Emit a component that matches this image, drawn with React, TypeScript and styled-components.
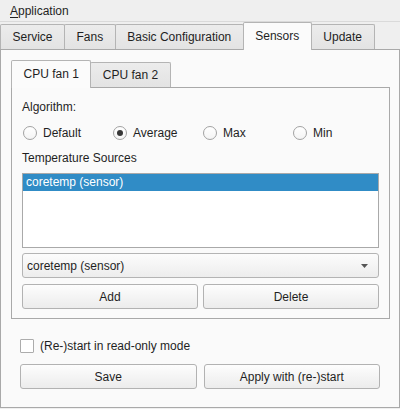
import React from 'react';
import styled, { createGlobalStyle } from 'styled-components';

const GlobalStyle = createGlobalStyle`
  html, body {
    margin: 0;
    padding: 0;
  }
  body {
    background: #efefef;
    font-family: "Liberation Sans", Arial, sans-serif;
    font-size: 12px;
    color: #1f1f1f;
  }
`;

const Window = styled.div`
  display: flex;
  flex-direction: column;
  width: 400px;
  height: 409px;
  overflow: hidden;
`;

const MenuBar = styled.div`
  display: flex;
  align-items: center;
  height: 21px;
  padding-left: 10px;
  border-bottom: 1px solid #dadada;
  box-sizing: content-box;
`;

const Mnemonic = styled.span`
  text-decoration: underline;
  text-underline-offset: 2px;
`;

const TabBar = styled.div`
  display: flex;
  align-items: flex-end;
  height: 27px;
  flex-shrink: 0;
`;

const Tab = styled.div<{ $active?: boolean }>`
  position: relative;
  z-index: ${p => (p.$active ? 2 : 1)};
  flex-shrink: 0;
  box-sizing: border-box;
  display: flex;
  align-items: center;
  justify-content: center;
  height: ${p => (p.$active ? 28 : 25)}px;
  margin-bottom: ${p => (p.$active ? -1 : 0)}px;
  margin-left: -1px;
  padding: 0 11.5px ${p => (p.$active ? 1 : 0)}px;
  border: 1px solid #b4b4b4;
  border-bottom: none;
  border-radius: 2px 2px 0 0;
  background: ${p => (p.$active ? '#fbfbfb' : 'linear-gradient(#ececec, #e3e3e3)')};
  white-space: nowrap;

  &:first-child {
    margin-left: 0;
  }
`;

const OuterPane = styled.div`
  flex: 1;
  display: flex;
  flex-direction: column;
  margin-bottom: 1px;
  padding: 10px 9px 0 10px;
  border: 1px solid #a9a9a9;
  background: #fafafa;
`;

const InnerPane = styled.div`
  display: flex;
  flex-direction: column;
  padding: 12px 10px 9px 10px;
  border: 1px solid #a9a9a9;
  background: #fafafa;
`;

const Label = styled.div<{ $top?: number }>`
  line-height: 15px;
  margin-top: ${p => p.$top ?? 0}px;
`;

const RadioRow = styled.div`
  display: grid;
  grid-template-columns: repeat(4, 90px);
  height: 16px;
  margin: 10px 0 0 1px;
`;

const RadioOption = styled.label`
  display: flex;
  align-items: center;
  gap: 6px;
`;

const RadioCircle = styled.span<{ $checked?: boolean }>`
  position: relative;
  box-sizing: border-box;
  width: 14px;
  height: 14px;
  border: 1px solid #a2a2a2;
  border-radius: 50%;
  background: linear-gradient(#ffffff, #f4f4f4);

  &::after {
    content: '';
    display: ${p => (p.$checked ? 'block' : 'none')};
    position: absolute;
    left: 3px;
    top: 3px;
    width: 6px;
    height: 6px;
    border-radius: 50%;
    background: #363636;
  }
`;

const ListBox = styled.div`
  height: 75px;
  margin-top: 7px;
  box-sizing: border-box;
  border: 1px solid #a9a9a9;
  background: #ffffff;
`;

const ListItem = styled.div<{ $selected?: boolean }>`
  height: 17px;
  line-height: 17px;
  padding-left: 3px;
  background: ${p => (p.$selected ? '#308cc6' : 'transparent')};
  color: ${p => (p.$selected ? '#ffffff' : 'inherit')};
`;

const ComboBox = styled.div`
  display: flex;
  align-items: center;
  justify-content: space-between;
  height: 25px;
  margin-top: 5px;
  box-sizing: border-box;
  padding: 0 10px 0 4px;
  border: 1px solid #b4b4b4;
  border-radius: 3px;
  background: linear-gradient(#fcfcfc, #ededed);
`;

const ButtonRow = styled.div<{ $gap: number; $top: number }>`
  display: grid;
  grid-template-columns: 1fr 1fr;
  gap: ${p => p.$gap}px;
  margin-top: ${p => p.$top}px;
`;

const Button = styled.button`
  height: 25px;
  box-sizing: border-box;
  padding: 0;
  border: 1px solid #b2b2b2;
  border-radius: 3px;
  background: linear-gradient(#fdfdfd, #ececec);
  font: inherit;
  color: #1f1f1f;
  text-align: center;
`;

const Footer = styled.div`
  display: flex;
  flex-direction: column;
  padding: 0 10px 0 9px;
`;

const CheckRow = styled.label`
  display: flex;
  align-items: center;
  gap: 6px;
  height: 14px;
  margin-top: 20px;
`;

const CheckBox = styled.span`
  box-sizing: border-box;
  width: 14px;
  height: 14px;
  border: 1px solid #acacac;
  border-radius: 1px;
  background: #ffffff;
`;

const Arrow = () => (
  <svg width="7" height="4" viewBox="0 0 7 4">
    <polygon points="0,0 7,0 3.5,4" fill="#555555" />
  </svg>
);

const algorithms = ['Default', 'Average', 'Max', 'Min'];

export default function App() {
  return (
    <>
      <GlobalStyle />
      <Window>
        <MenuBar>
          <span>
            <Mnemonic>A</Mnemonic>pplication
          </span>
        </MenuBar>
        <TabBar>
          <Tab>Service</Tab>
          <Tab>Fans</Tab>
          <Tab>Basic Configuration</Tab>
          <Tab $active>Sensors</Tab>
          <Tab>Update</Tab>
        </TabBar>
        <OuterPane>
          <TabBar>
            <Tab $active>CPU fan 1</Tab>
            <Tab>CPU fan 2</Tab>
          </TabBar>
          <InnerPane>
            <Label>Algorithm:</Label>
            <RadioRow>
              {algorithms.map(name => (
                <RadioOption key={name}>
                  <RadioCircle $checked={name === 'Average'} />
                  {name}
                </RadioOption>
              ))}
            </RadioRow>
            <Label $top={10}>Temperature Sources</Label>
            <ListBox>
              <ListItem $selected>coretemp (sensor)</ListItem>
            </ListBox>
            <ComboBox>
              <span>coretemp (sensor)</span>
              <Arrow />
            </ComboBox>
            <ButtonRow $gap={5} $top={6}>
              <Button>Add</Button>
              <Button>Delete</Button>
            </ButtonRow>
          </InnerPane>
          <Footer>
            <CheckRow>
              <CheckBox />
              (Re-)start in read-only mode
            </CheckRow>
            <ButtonRow $gap={7} $top={11}>
              <Button>Save</Button>
              <Button>Apply with (re-)start</Button>
            </ButtonRow>
          </Footer>
        </OuterPane>
      </Window>
    </>
  );
}
